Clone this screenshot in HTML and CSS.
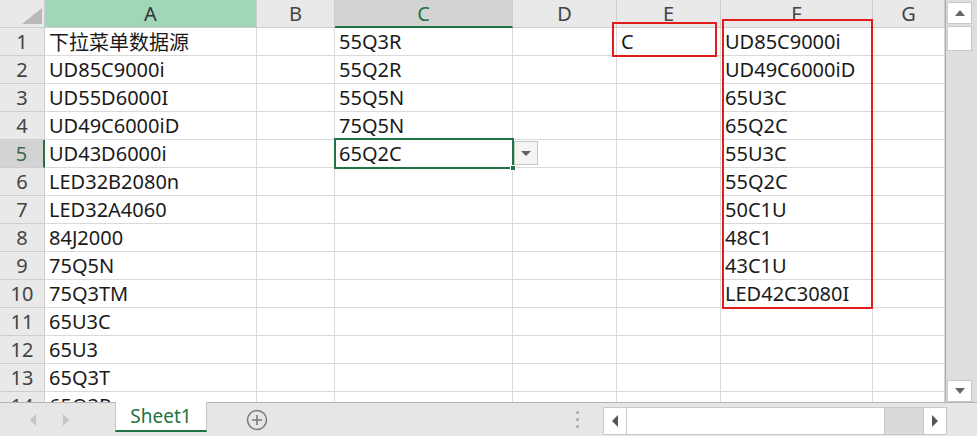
FILE: index.html
```html
<!DOCTYPE html>
<html lang="zh">
<head>
<meta charset="utf-8">
<title>Sheet1</title>
<link rel="stylesheet" href="styles.css">
</head>
<body>
<div class="app">
  <div class="top">
    <div class="sheet">
      <div class="grid">
        <div class="hd corner"><span class="tri"></span></div>
        <div class="hd col col-a">A</div>
        <div class="hd col">B</div>
        <div class="hd col col-sel">C</div>
        <div class="hd col">D</div>
        <div class="hd col">E</div>
        <div class="hd col">F</div>
        <div class="hd col">G</div>

        <div class="hd rowh">1</div><div class="c">下拉菜单数据源</div><div class="c"></div><div class="c">55Q3R</div><div class="c"></div><div class="c">C</div><div class="c">UD85C9000i</div><div class="c"></div>
        <div class="hd rowh">2</div><div class="c">UD85C9000i</div><div class="c"></div><div class="c">55Q2R</div><div class="c"></div><div class="c"></div><div class="c">UD49C6000iD</div><div class="c"></div>
        <div class="hd rowh">3</div><div class="c">UD55D6000I</div><div class="c"></div><div class="c">55Q5N</div><div class="c"></div><div class="c"></div><div class="c">65U3C</div><div class="c"></div>
        <div class="hd rowh">4</div><div class="c">UD49C6000iD</div><div class="c"></div><div class="c">75Q5N</div><div class="c"></div><div class="c"></div><div class="c">65Q2C</div><div class="c"></div>
        <div class="hd rowh row-sel">5</div><div class="c">UD43D6000i</div><div class="c"></div><div class="c">65Q2C</div><div class="c"></div><div class="c"></div><div class="c">55U3C</div><div class="c"></div>
        <div class="hd rowh">6</div><div class="c">LED32B2080n</div><div class="c"></div><div class="c"></div><div class="c"></div><div class="c"></div><div class="c">55Q2C</div><div class="c"></div>
        <div class="hd rowh">7</div><div class="c">LED32A4060</div><div class="c"></div><div class="c"></div><div class="c"></div><div class="c"></div><div class="c">50C1U</div><div class="c"></div>
        <div class="hd rowh">8</div><div class="c">84J2000</div><div class="c"></div><div class="c"></div><div class="c"></div><div class="c"></div><div class="c">48C1</div><div class="c"></div>
        <div class="hd rowh">9</div><div class="c">75Q5N</div><div class="c"></div><div class="c"></div><div class="c"></div><div class="c"></div><div class="c">43C1U</div><div class="c"></div>
        <div class="hd rowh">10</div><div class="c">75Q3TM</div><div class="c"></div><div class="c"></div><div class="c"></div><div class="c"></div><div class="c">LED42C3080I</div><div class="c"></div>
        <div class="hd rowh">11</div><div class="c">65U3C</div><div class="c"></div><div class="c"></div><div class="c"></div><div class="c"></div><div class="c"></div><div class="c"></div>
        <div class="hd rowh">12</div><div class="c">65U3</div><div class="c"></div><div class="c"></div><div class="c"></div><div class="c"></div><div class="c"></div><div class="c"></div>
        <div class="hd rowh">13</div><div class="c">65Q3T</div><div class="c"></div><div class="c"></div><div class="c"></div><div class="c"></div><div class="c"></div><div class="c"></div>
        <div class="hd rowh">14</div><div class="c">65Q3R</div><div class="c"></div><div class="c"></div><div class="c"></div><div class="c"></div><div class="c"></div><div class="c"></div>
      </div>

      <div class="selection"><span class="handle"></span></div>
      <div class="dropdown"><span class="dd-arrow"></span></div>
      <div class="redbox box-e"></div>
      <div class="redbox box-f"></div>
    </div>

    <div class="vscroll">
      <div class="sbtn up"><span class="arr arr-up"></span></div>
      <div class="vthumb"></div>
      <div class="vtrack"></div>
      <div class="sbtn down"><span class="arr arr-down"></span></div>
    </div>
  </div>

  <div class="bottombar">
    <div class="nav">
      <span class="navarr nav-left"></span>
      <span class="navarr nav-right"></span>
    </div>
    <div class="tab">Sheet1</div>
    <div class="addwrap">
      <svg class="add" width="22" height="22" viewBox="0 0 22 22">
        <circle cx="11" cy="11" r="9.5" fill="none" stroke="#7a7a7a" stroke-width="1.5"/>
        <path d="M11 6v10M6 11h10" stroke="#7a7a7a" stroke-width="1.6"/>
      </svg>
    </div>
    <div class="spacer"></div>
    <div class="dots"><span></span><span></span><span></span></div>
    <div class="hscroll">
      <div class="hbtn"><span class="arr arr-left"></span></div>
      <div class="hthumb"></div>
      <div class="htrack"></div>
      <div class="hbtn"><span class="arr arr-right"></span></div>
    </div>
  </div>
</div>
</body>
</html>
```

FILE: styles.css
```css
* { box-sizing: border-box; }

html, body {
  margin: 0;
  padding: 0;
  background: #ffffff;
}

body {
  font-family: "Noto Sans", "Noto Sans CJK SC", sans-serif;
  width: 977px;
  height: 436px;
  overflow: hidden;
}

.app {
  display: flex;
  flex-direction: column;
  width: 977px;
  height: 436px;
}

.top {
  display: flex;
  height: 403px;
  border-bottom: 1px solid #b4b4b4;
}

.sheet {
  position: relative;
  width: 946px;
  height: 402px;
  overflow: hidden;
  border-right: 1px solid #a8a8a8;
}

.grid {
  display: grid;
  grid-template-columns: 45px 212px 78px 178px 104px 104px 152px 72px;
  grid-template-rows: 28px;
  grid-auto-rows: 28px;
}

.c {
  border-right: 1px solid #d9d9d9;
  border-bottom: 1px solid #d9d9d9;
  display: flex;
  align-items: center;
  padding-left: 4px;
  font-size: 20px;
  color: #1a1a1a;
  white-space: nowrap;
  overflow: visible;
}

.hd {
  background: #e9e9e9;
  border-right: 1px solid #cdcdcd;
  border-bottom: 1px solid #cdcdcd;
  display: flex;
  align-items: center;
  justify-content: center;
  font-size: 20px;
  color: #444444;
}

.corner {
  position: relative;
}

.tri {
  width: 20px;
  height: 16px;
  margin: 8px 2px 3px 22px;
  background: #b9b9b9;
  clip-path: polygon(0 100%, 100% 100%, 100% 0);
}

.col-a {
  background: #a0d7b8;
  color: #333333;
}

.col-sel {
  background: #d3d3d3;
  color: #217346;
  border-bottom: 2px solid #217346;
}

.row-sel {
  background: #d3d3d3;
  color: #3c6b52;
  border-right: 2px solid #217346;
}

.selection {
  position: absolute;
  left: 334px;
  top: 138px;
  width: 180px;
  height: 31px;
  border: 2px solid #217346;
}

.handle {
  position: absolute;
  right: -4px;
  bottom: -4px;
  width: 6px;
  height: 6px;
  background: #217346;
  border: 1px solid #ffffff;
}

.dropdown {
  position: absolute;
  left: 514px;
  top: 141px;
  width: 24px;
  height: 24px;
  background: #f4f4f4;
  border: 1px solid #c6c6c6;
  display: flex;
  align-items: center;
  justify-content: center;
}

.dd-arrow {
  width: 0;
  height: 0;
  border-left: 5px solid transparent;
  border-right: 5px solid transparent;
  border-top: 5px solid #606060;
}

.redbox {
  position: absolute;
  border: 2px solid #e21b1b;
}

.box-e {
  left: 612px;
  top: 22px;
  width: 105px;
  height: 35px;
}

.box-f {
  left: 722px;
  top: 19px;
  width: 151px;
  height: 290px;
}

.vscroll {
  width: 31px;
  height: 402px;
  background: #dedede;
  display: flex;
  flex-direction: column;
  padding: 2px 5px 0 1px;
}

.sbtn {
  height: 22px;
  background: #ffffff;
  border: 1px solid #c8c8c8;
  display: flex;
  align-items: center;
  justify-content: center;
}

.vthumb {
  height: 25px;
  margin-top: 2px;
  background: #ffffff;
  border: 1px solid #c8c8c8;
}

.vtrack {
  flex: 1;
}

.arr {
  width: 0;
  height: 0;
}

.arr-up {
  border-left: 5px solid transparent;
  border-right: 5px solid transparent;
  border-bottom: 6px solid #666666;
}

.arr-down {
  border-left: 5px solid transparent;
  border-right: 5px solid transparent;
  border-top: 6px solid #666666;
}

.arr-left {
  border-top: 6px solid transparent;
  border-bottom: 6px solid transparent;
  border-right: 6px solid #555555;
}

.arr-right {
  border-top: 6px solid transparent;
  border-bottom: 6px solid transparent;
  border-left: 6px solid #555555;
}

.bottombar {
  flex: 1;
  display: flex;
  align-items: stretch;
  background: #e6e6e6;
}

.nav {
  width: 115px;
  display: flex;
  align-items: center;
  padding-left: 30px;
  gap: 27px;
}

.navarr {
  width: 0;
  height: 0;
  border-top: 6px solid transparent;
  border-bottom: 6px solid transparent;
}

.nav-left {
  border-right: 6px solid #c4c4c4;
}

.nav-right {
  border-left: 6px solid #c4c4c4;
}

.tab {
  width: 92px;
  height: 30px;
  background: #ffffff;
  border-left: 1px solid #c4c4c4;
  border-right: 1px solid #c4c4c4;
  border-bottom: 2px solid #217346;
  color: #217346;
  font-size: 19px;
  display: flex;
  align-items: center;
  justify-content: center;
  margin-top: -1px;
}

.addwrap {
  width: 100px;
  display: flex;
  align-items: center;
  justify-content: center;
}

.spacer {
  flex: 1;
}

.dots {
  width: 20px;
  display: flex;
  flex-direction: column;
  align-items: center;
  justify-content: center;
  gap: 4px;
  margin-right: 16px;
}

.dots span {
  width: 3px;
  height: 3px;
  background: #a8a8a8;
  border-radius: 50%;
}

.hscroll {
  width: 344px;
  margin-right: 30px;
  display: flex;
  padding: 4px 0 1px 0;
}

.hbtn {
  width: 24px;
  background: #ffffff;
  border: 1px solid #c8c8c8;
  display: flex;
  align-items: center;
  justify-content: center;
}

.hthumb {
  width: 258px;
  background: #ffffff;
  border-top: 1px solid #c8c8c8;
  border-bottom: 1px solid #c8c8c8;
  border-right: 1px solid #c8c8c8;
}

.htrack {
  flex: 1;
  background: #dadada;
  border-top: 1px solid #c8c8c8;
  border-bottom: 1px solid #c8c8c8;
}
```
